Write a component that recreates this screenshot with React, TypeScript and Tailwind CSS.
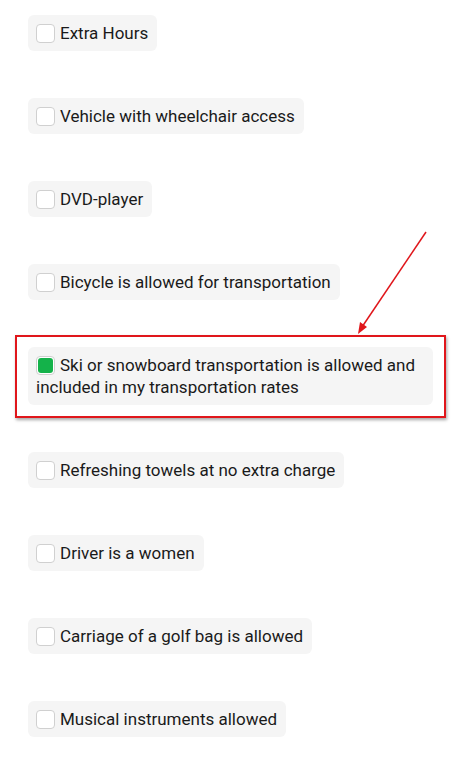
const options = [
  { label: "Extra Hours", checked: false },
  { label: "Vehicle with wheelchair access", checked: false },
  { label: "DVD-player", checked: false },
  { label: "Bicycle is allowed for transportation", checked: false },
  {
    label:
      "Ski or snowboard transportation is allowed and included in my transportation rates",
    checked: true,
    highlight: true,
  },
  { label: "Refreshing towels at no extra charge", checked: false },
  { label: "Driver is a women", checked: false },
  { label: "Carriage of a golf bag is allowed", checked: false },
  { label: "Musical instruments allowed", checked: false },
];

function Box({ checked }: { checked: boolean }) {
  return (
    <span className="mr-[5px] inline-block h-[19px] w-[19px] rounded-[4px] border border-[#d0d0d0] bg-white p-[1px] align-[-4px]">
      {checked && (
        <span className="block h-full w-full rounded-[3px] bg-[#14b24a]" />
      )}
    </span>
  );
}

function Option({
  label,
  checked,
  highlight,
}: {
  label: string;
  checked: boolean;
  highlight?: boolean;
}) {
  return (
    <div className="relative">
      {highlight && (
        <div className="pointer-events-none absolute -top-[12px] -left-[13px] -right-[13px] -bottom-[13px] border-2 border-[#e0161b] shadow-[1px_2px_3px_rgba(0,0,0,0.35)]" />
      )}
      <label className="block rounded-[6px] bg-[#f5f5f5] py-[7px] pl-[8px] pr-[9px] text-[17px] leading-[22px] text-[#1a1a1a]">
        <Box checked={checked} />
        {label}
      </label>
    </div>
  );
}

export default function App() {
  return (
    <div
      className="relative min-h-[764px] bg-white"
      style={{ fontFamily: "Roboto, 'Liberation Sans', sans-serif" }}
    >
      <div className="flex flex-col items-start gap-[47px] pt-[15px] pr-[31px] pl-[28px]">
        {options.map((o) => (
          <Option key={o.label} {...o} />
        ))}
      </div>
      {/* annotation arrow */}
      <svg
        className="pointer-events-none absolute top-0 left-0"
        width="464"
        height="764"
        viewBox="0 0 464 764"
      >
        <line x1="426" y1="232" x2="362" y2="327" stroke="#e0161b" strokeWidth="1.5" />
        <polygon points="358,334 360,322 367,327" fill="#e0161b" />
      </svg>
    </div>
  );
}
